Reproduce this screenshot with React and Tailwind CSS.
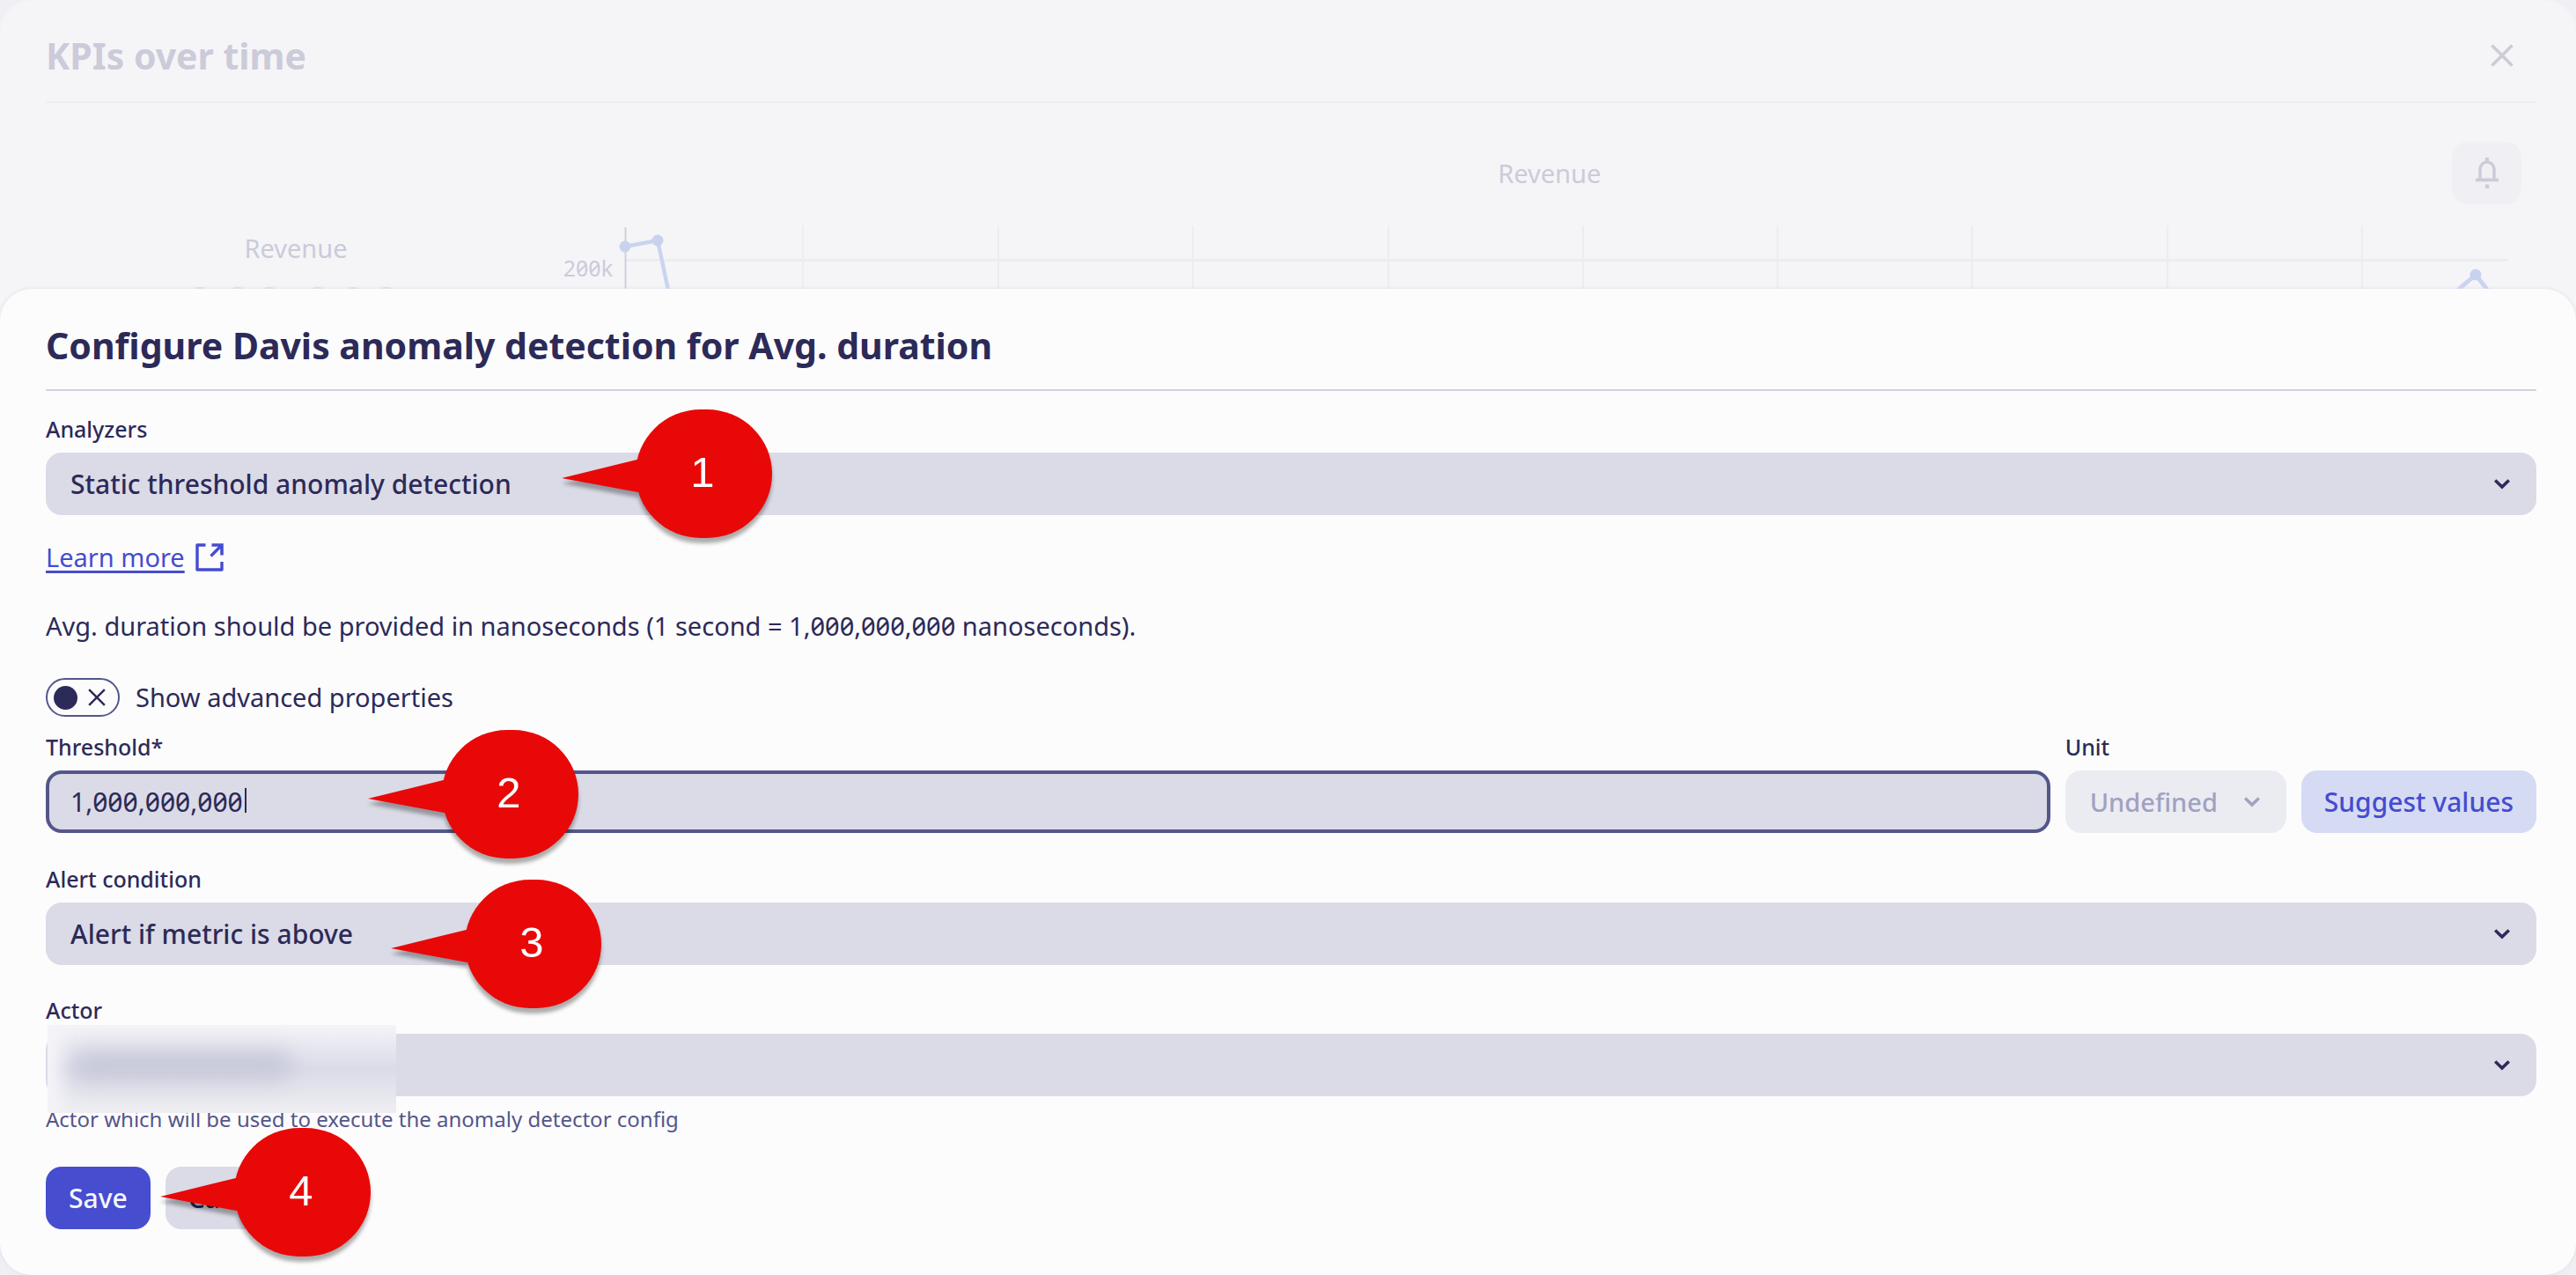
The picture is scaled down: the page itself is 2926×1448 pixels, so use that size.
import React from 'react';

function Chevron({ className }) {
  return (
    <svg viewBox="0 0 18 12" className={className} fill="none" stroke="currentColor" strokeWidth="3.6" aria-hidden="true">
      <path d="M1.2 1.5 L9 9 L16.8 1.5" strokeLinejoin="miter" />
    </svg>
  );
}

function Cross({ className, strokeWidth }) {
  return (
    <svg viewBox="0 0 26 26" className={className} fill="none" stroke="currentColor" strokeWidth={strokeWidth} aria-hidden="true">
      <path d="M1.5 1.5 L24.5 24.5 M24.5 1.5 L1.5 24.5" />
    </svg>
  );
}

function Bell() {
  return (
    <svg viewBox="0 0 26 36" className="h-9 w-[26px]" fill="none" aria-hidden="true">
      <path d="M5 24.5 V14 C5 8.5 8.5 5 13 5 C17.5 5 21 8.5 21 14 V24.5" stroke="currentColor" strokeWidth="3.4" />
      <path d="M0 23.5 H26 V27.2 H0 Z M11 0 H15 V5 H11 Z M11 30.5 H15.3 V35 H11 Z" fill="currentColor" />
    </svg>
  );
}

function ExternalLink() {
  return (
    <svg viewBox="0 0 32 32" className="h-8 w-8" fill="none" stroke="currentColor" aria-hidden="true">
      <path d="M11.5 2 H2 V30 H30 V21" strokeWidth="3.4" strokeLinejoin="round" />
      <path d="M18.5 2 H30 V13.5" strokeWidth="3.6" />
      <path d="M29.5 2.5 L17.5 14.5" strokeWidth="3.4" />
    </svg>
  );
}

function Callout({ number, className }) {
  return (
    <div className={`pointer-events-none absolute z-10 h-[146px] w-[239px] ${className}`}>
      <svg viewBox="0 0 239 146" className="h-full w-full overflow-visible drop-shadow-[0_6px_2px_rgba(0,0,0,0.32)]" fill="#e90808" aria-hidden="true">
        <rect x="84" y="0" width="155" height="146" rx="74" ry="73" />
        <path d="M0 78 L85.5 57 L110 75 L86.5 94 Z" />
      </svg>
      <span className="absolute inset-y-0 right-0 grid w-[158px] place-items-center pb-1 font-['Liberation_Sans',sans-serif] text-[49px] leading-none text-white">
        {number}
      </span>
    </div>
  );
}

function SelectField({ id, label, value, children }) {
  return (
    <div className="flex flex-col gap-[11px]">
      <label htmlFor={id} className="self-start text-[25px] leading-8 font-medium">{label}</label>
      <div className="relative">
        <select
          id={id}
          defaultValue={value}
          className="block h-[71px] w-full appearance-none rounded-[18px] bg-[#dbdbe7] pr-16 pl-7 text-[30px] font-medium outline-none"
        >
          <option>{value}</option>
        </select>
        <Chevron className="pointer-events-none absolute top-[30px] right-[30px] h-3 w-[18px]" />
        {children}
      </div>
    </div>
  );
}

const gridLines = [202, 424, 645, 867, 1088, 1309, 1530, 1752, 1973];
const clippedDigits = [0, 43, 79, 134, 174, 212];

function ChartPeek() {
  return (
    <svg viewBox="0 0 2200 108" preserveAspectRatio="xMinYMin slice" className="h-[108px] min-w-0 flex-1" fill="none" aria-hidden="true">
      <g stroke="#ececf2" strokeWidth="2">
        {gridLines.map((x) => (
          <path key={x} d={`M${x + 10} 0 V108`} />
        ))}
        <path d="M10 39.5 H2149" strokeWidth="3" />
      </g>
      <path d="M10.5 2 V108" stroke="#cfcfdd" strokeWidth="2" />
      <g stroke="#cad4f0" strokeWidth="4.5">
        <path d="M10 24 L47 17 L63 92" />
        <path d="M2070 92 L2112 56 L2145 98" strokeWidth="5" />
      </g>
      <g fill="#c8d2ef">
        <circle cx="10" cy="24" r="6.5" />
        <circle cx="47" cy="17" r="6.5" />
        <circle cx="2112" cy="56" r="6.5" />
      </g>
    </svg>
  );
}

export default function App() {
  return (
    <div className="flex min-h-screen flex-col bg-[#efeff4] font-['Noto_Sans',sans-serif] text-[#2c2a58] [font-feature-settings:'zero'_1]">
      <section className="h-[364px] overflow-hidden rounded-t-[36px] bg-[#f5f5f8] pr-[45px] pl-[52px] text-[#cbcbd9]">
        <header className="flex h-[117px] items-center justify-between border-b-2 border-[#ececf3] pt-[10px] pr-[26px]">
          <h1 className="text-[41px] leading-[56px] font-bold">KPIs over time</h1>
          <button type="button" aria-label="Close">
            <Cross className="h-[26px] w-[26px]" strokeWidth="3.6" />
          </button>
        </header>
        <div className="flex">
          <div className="flex w-[568px] flex-col items-center pt-[145px]">
            <p className="text-[29px] leading-10">Revenue</p>
            <svg viewBox="0 0 230 8" className="mt-[22px] h-2 w-[230px]" fill="#ead8e2" aria-hidden="true">
              {clippedDigits.map((x) => (
                <ellipse key={x} cx={x + 6} cy="4" rx="6" ry="2" />
              ))}
            </svg>
          </div>
          <div className="flex min-w-0 flex-1 flex-col">
            <div className="grid grid-cols-1 grid-rows-1 items-center pt-11 pr-[17px]">
              <p className="col-start-1 row-start-1 pl-[36px] text-center text-[29px] leading-10">Revenue</p>
              <button type="button" aria-label="Alerts" className="col-start-1 row-start-1 grid h-[71px] w-[79px] place-items-center justify-self-end rounded-[18px] bg-[#efeff4]">
                <Bell />
              </button>
            </div>
            <div className="mt-6 flex items-start">
              <span className="w-20 pt-8 pr-1 text-right text-[25px] leading-8">200k</span>
              <ChartPeek />
            </div>
          </div>
        </div>
      </section>

      <main className="relative -mt-9 flex flex-1 flex-col rounded-[36px] bg-[#fcfcfd] pt-9 pr-[45px] pb-12 pl-[52px] shadow-[0_0_4px_#dcdce4]">
        <h2 className="border-b-2 border-[#d1d1e0] pb-[22px] text-[41px] leading-[56px] font-bold">
          Configure Davis anomaly detection for Avg. duration
        </h2>

        <form className="flex flex-col pt-[27px]" onSubmit={(e) => e.preventDefault()}>
          <SelectField id="analyzer" label="Analyzers" value="Static threshold anomaly detection">
            <Callout number="1" className="-top-[49px] left-[586px]" />
          </SelectField>

          <a href="#learn-more" className="mt-7 flex items-center gap-3 self-start text-[29px] leading-10 text-[#454ccf]">
            <span className="underline decoration-3 underline-offset-4">Learn more</span>
            <ExternalLink />
          </a>

          <p className="mt-[38px] text-[29px] leading-10">
            Avg. duration should be provided in nanoseconds (1 second = 1,000,000,000 nanoseconds).
          </p>

          <label className="mt-[39px] flex items-center gap-[18px] self-start text-[29px] leading-[44px]">
            <span className="relative block h-11 w-[84px]">
              <input type="checkbox" role="switch" className="block h-11 w-[84px] appearance-none rounded-full border-2 border-[#54568a]" />
              <span className="pointer-events-none absolute inset-0 flex items-center justify-between pr-4 pl-[9px]">
                <span className="h-[27px] w-[27px] rounded-full bg-[#2c2a58]" />
                <Cross className="h-5 w-5" strokeWidth="3.2" />
              </span>
            </span>
            Show advanced properties
          </label>

          <div className="mt-[18px] flex items-end gap-[17px]">
            <div className="flex min-w-0 flex-1 flex-col gap-[11px]">
              <label htmlFor="threshold" className="self-start text-[25px] leading-8 font-medium">Threshold*</label>
              <div className="relative">
                <input
                  id="threshold"
                  type="text"
                  defaultValue="1,000,000,000"
                  className="block h-[71px] w-full rounded-[18px] border-4 border-[#54568a] bg-[#dbdbe7] px-6 text-[30px] caret-transparent outline-none"
                />
                <span className="pointer-events-none absolute top-5 left-[226px] h-7 w-0.5 bg-[#2c2a58]" />
                <Callout number="2" className="-top-[46px] left-[366px]" />
              </div>
            </div>
            <div className="flex flex-col gap-[11px]">
              <label htmlFor="unit" className="self-start text-[25px] leading-8 font-medium">Unit</label>
              <div className="relative">
                <select
                  id="unit"
                  disabled
                  defaultValue="Undefined"
                  className="block h-[71px] w-[251px] appearance-none rounded-[18px] bg-[#ebecf2] pl-7 text-[29px] font-medium text-[#a1a1c1] opacity-100"
                >
                  <option>Undefined</option>
                </select>
                <Chevron className="pointer-events-none absolute top-[30px] right-[30px] h-3 w-[18px] text-[#a1a1c1]" />
              </div>
            </div>
            <button type="button" className="h-[71px] rounded-[18px] bg-[#d6dbf4] px-[26px] text-[30px] font-medium text-[#454ccf]">
              Suggest values
            </button>
          </div>

          <div className="mt-9">
            <SelectField id="condition" label="Alert condition" value="Alert if metric is above">
              <Callout number="3" className="-top-[26px] left-[392px]" />
            </SelectField>
          </div>

          <div className="mt-[35px]">
            <SelectField id="actor" label="Actor" value="">
              <span className="pointer-events-none absolute -top-[10px] left-0.5 block h-[100px] w-[396px] overflow-hidden bg-linear-to-b from-[#f4f4f8] via-[#dbdbe8] to-[#eeeef2]">
                <span className="absolute -inset-y-2 -left-4 block w-8 bg-[#f4f4f8] blur-[10px]" />
                <span className="absolute top-[30px] left-7 block h-8 w-[250px] rounded-full bg-[#c6c8d8] blur-[12px]" />
              </span>
            </SelectField>
            <p className="mt-[10px] text-[24px] leading-8 text-[#54568a]">
              Actor which will be used to execute the anomaly detector config
            </p>
          </div>

          <div className="relative mt-[38px] flex gap-[17px]">
            <button type="submit" className="h-[71px] rounded-[18px] bg-[#464dcf] px-[26px] text-[30px] font-medium text-[#f5f5fc]">
              Save
            </button>
            <button type="button" className="h-[71px] rounded-[18px] bg-[#dbdbe7] px-[26px] text-[30px] font-medium">
              Cancel
            </button>
            <Callout number="4" className="-top-11 left-[130px]" />
          </div>
        </form>
      </main>
    </div>
  );
}
